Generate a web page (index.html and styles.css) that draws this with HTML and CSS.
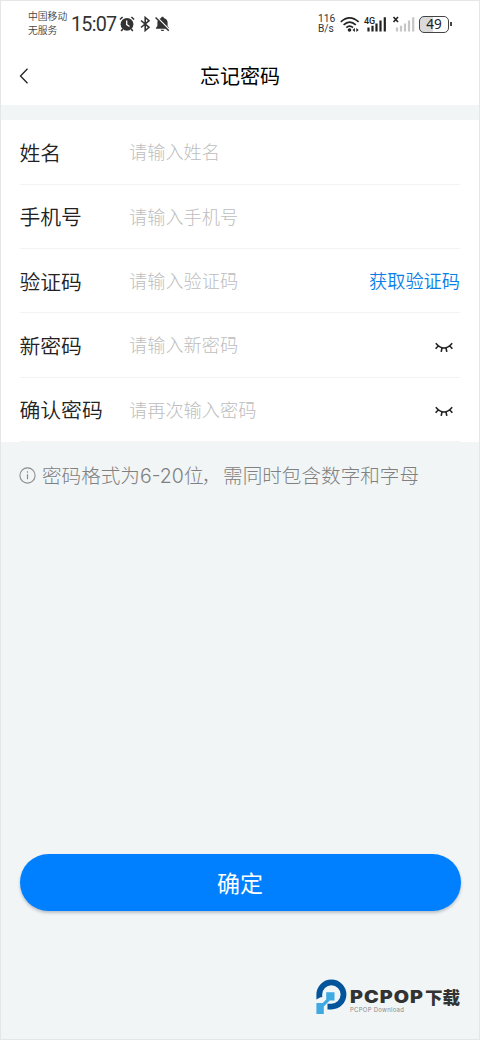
FILE: index.html
```html
<!DOCTYPE html>
<html lang="zh-CN">
<head>
<meta charset="utf-8">
<title>忘记密码</title>
<link rel="stylesheet" href="styles.css">
</head>
<body>
<div class="screen">
  <header class="top">
    <div class="status">
      <div class="carrier"><span>中国移动</span><span>无服务</span></div>
      <span class="clock">15:07</span>
      <svg class="ic-alarm" width="16" height="16" viewBox="0 0 16 16">
        <circle cx="8" cy="8.3" r="6.4" fill="#333"/>
        <path d="M.9 3.5 3.6 1M15.1 3.5 12.4 1M3.8 13 2.2 15M12.2 13l1.6 2" stroke="#333" stroke-width="1.6" fill="none"/>
        <path d="M7.7 4.6v4l2.8 1.9" stroke="#fff" stroke-width="1.3" fill="none"/>
      </svg>
      <svg class="ic-bt" width="11" height="16" viewBox="0 0 11 16">
        <path d="M1 4.5l8 6.8-3.8 3.2v-13L9 4.7l-8 6.8" stroke="#333" stroke-width="1.6" fill="none"/>
      </svg>
      <svg class="ic-bell" width="15" height="16" viewBox="0 0 15 16">
        <path d="M7.5.8c.9 0 1.3.5 1.3 1.2 2.5.6 3.8 2.3 3.8 4.5v3.5l1.5 1.9v.9H.9v-.9l1.5-1.9V6.5c0-2.2 1.3-3.9 3.8-4.5 0-.7.4-1.2 1.3-1.2zM5.7 13.700h3.6c-.2 1.700-3.400 1.700-3.600 0z" fill="#333"/>
        <path d="M1.600 1 14.800 14.200" stroke="#fff" stroke-width="1.500"/>
        <path d="M.6 1.500 13.800 14.700" stroke="#333" stroke-width="1.500"/>
      </svg>
      <div class="speed"><span>116</span><span>B/s</span></div>
      <svg class="ic-wifi" width="20" height="17" viewBox="0 0 20 17">
        <g fill="none" stroke="#222" stroke-width="1.700">
          <path d="M.8 5.800Q9.600-2.200 18.600 5.800"/><path d="M3.600 8.900Q9.600 3.300 15.800 8.900"/><path d="M6.300 11.700Q9.600 8.700 13 11.700"/>
        </g>
        <circle cx="9.500" cy="14" r="1.800" fill="#222"/>
        <path d="M12.500 14l2.400-1.900v3.800zM18.700 14l-2.400-1.900v3.800z" fill="#222"/>
      </svg>
      <svg class="ic-cell" width="24" height="18" viewBox="0 0 24 18">
        <text x="0" y="9" class="cell-text">4G</text>
        <path d="M4.500 12.500v4M8.500 10.800v5.700M12.500 8.500v8M16.500 5.500v11M20.800 2.200v14.300" stroke="#222" stroke-width="2.200"/>
      </svg>
      <svg class="ic-cell2" width="24" height="18" viewBox="0 0 24 18">
        <path d="M1.500 2l4.500 5M6 2 1.500 7" stroke="#222" stroke-width="1.600"/>
        <path d="M5 12.500v4M9 10.800v5.700M13 8.500v8M17 5.500v11M21.200 2.200v14.300" stroke="#c6c6c6" stroke-width="2.200"/>
      </svg>
      <div class="battery"><span>49</span></div>
    </div>
    <div class="nav">
      <svg class="back" width="10" height="18" viewBox="0 0 10 18"><path d="M8.500 1.800 1.500 9l7 7.200" fill="none" stroke="#222" stroke-width="1.300"/></svg>
      <h1>忘记密码</h1>
    </div>
  </header>

  <main class="form">
    <div class="row"><label>姓名</label><span class="hint">请输入姓名</span></div>
    <div class="row"><label>手机号</label><span class="hint">请输入手机号</span></div>
    <div class="row"><label>验证码</label><span class="hint">请输入验证码</span><a class="code">获取验证码</a></div>
    <div class="row"><label>新密码</label><span class="hint">请输入新密码</span>
      <svg class="eye" width="18" height="11" viewBox="0 0 18 11"><path d="M.8 1.200Q9 10.800 17.200 1.200M3.500 3.800.6 6.800M14.500 3.800l2.900 3M7 5.800 6.200 9.800M11 5.800l.8 4" fill="none" stroke="#222" stroke-width="1.600"/></svg>
    </div>
    <div class="row"><label>确认密码</label><span class="hint">请再次输入密码</span>
      <svg class="eye" width="18" height="11" viewBox="0 0 18 11"><path d="M.8 1.200Q9 10.800 17.200 1.200M3.500 3.800.6 6.800M14.500 3.800l2.900 3M7 5.800 6.200 9.800M11 5.800l.8 4" fill="none" stroke="#222" stroke-width="1.600"/></svg>
    </div>
  </main>

  <div class="note">
    <svg width="17" height="17" viewBox="0 0 17 17"><circle cx="8.500" cy="8.500" r="7.600" fill="none" stroke="#8c8c8c" stroke-width="1.100"/><path d="M8.500 7.200v5M8.500 4.200v1.500" stroke="#8c8c8c" stroke-width="1.200"/></svg>
    <p>密码格式为<span class="digits">6-20</span>位<span class="comma">，</span>需同时包含数字和字母</p>
  </div>

  <button class="submit">确定</button>

  <footer class="brand">
    <svg width="31" height="36" viewBox="0 0 31 36">
      <path d="M.4 20.500V15.500a15 15 0 1 1 15 15h-3.900v-5.800h3.900a9.200 9.200 0 1 0-9.200-9.200v2.800H4.500z" fill="#04549c"/>
      <path d="M10.200 13.200h8.300v8.300h-4.700L7.800 27.400v7.500H.4v-11h6.300l3.500-3.400z" fill="#41a9e2"/>
    </svg>
    <div class="brand-text">
      <div class="brand-name"><span class="latin">PCPOP</span><span class="han">下载</span></div>
      <span class="brand-sub">PCPOP Download</span>
    </div>
  </footer>
</div>
</body>
</html>
```
FILE: styles.css
```css
* { box-sizing: border-box; }
body {
  margin: 0;
  font-family: Roboto, "Noto Sans CJK SC", sans-serif;
  color: #222;
}
.screen {
  width: 480px;
  height: 1040px;
  display: flex;
  flex-direction: column;
  background: #f1f5f6;
  border: 1px solid #e4e6e7;
  overflow: hidden;
}
.top { height: 104px; background: #fff; flex: none; }
.status { height: 46px; display: flex; align-items: center; padding-left: 27px; white-space: nowrap; }
.status > * { flex: none; }
.carrier { width: 43px; display: flex; flex-direction: column; font-size: 9.8px; line-height: 14.5px; color: #444; font-weight: 350; }
.clock { width: 48px; font-size: 19.8px; line-height: 24px; letter-spacing: -.8px; color: #333; padding-top: 1px; }
.ic-bt { margin-left: 5px; }
.ic-bell { margin-left: 4px; }
.speed { width: 22px; margin-left: 148px; display: flex; flex-direction: column; font-size: 10.2px; line-height: 10px; color: #333; }
.speed span { height: 10px; }
.ic-wifi { margin-top: 1px; }
.ic-cell { margin-left: 4px; }
.ic-cell2 { margin-left: 4px; }
.cell-text { font: 500 9px Roboto, sans-serif; fill: #222; }
.battery {
  position: relative;
  width: 30px;
  height: 17px;
  margin-left: 3px;
  border: 1.5px solid #444;
  border-radius: 5px;
  background: linear-gradient(90deg, #dadada 48%, #fff 48%);
  font: 400 13.5px/14px "Noto Sans", sans-serif;
  text-align: center;
}
.battery::after {
  content: "";
  position: absolute;
  right: -4px;
  top: 5px;
  width: 2px;
  height: 4px;
  background: #444;
}
.nav { display: grid; grid-template-columns: 60px 1fr 60px; align-items: center; height: 58px; }
.back { margin-left: 18px; }
.nav h1 { margin: 0; padding-top: 2px; text-align: center; font-size: 20px; font-weight: 400; line-height: 30px; color: #000; }
.form { flex: none; margin-top: 15px; padding: 0 19px 0 18.5px; height: 322px; background: #fff; display: grid; grid-template-rows: 64.6px repeat(4, 64.35px); }
.row { display: flex; align-items: center; border-bottom: 1px solid #f3f3f3; white-space: nowrap; }
.row label { width: 109.5px; font-size: 20.8px; font-weight: 350; line-height: 30px; font-family: "Noto Sans CJK SC DemiLight", "Noto Sans CJK SC", sans-serif; }
.hint { flex: 1; padding-top: 3px; font-size: 18.2px; font-weight: 300; line-height: 28px; color: #bdbdbd; }
.code { padding-top: 3px; font-size: 18.2px; font-weight: 350; line-height: 28px; color: #0a80e6; }
.eye { margin-right: 7px; margin-top: 5px; }
.note { flex: none; display: flex; align-items: center; height: 30px; margin: 18px 0 0 18px; color: #808080; }
.note p { margin: 0 0 0 6px; padding-top: 3px; font-size: 19.6px; font-weight: 300; line-height: 30px; white-space: nowrap; }
.digits { font: 300 19.5px Inter, sans-serif; }
.comma { display: inline-block; margin-left: -2px; margin-right: 2px; }
.submit {
  flex: none;
  width: 441px;
  height: 57px;
  margin: 364px 0 0 18.5px;
  padding: 0 0 2px;
  border: 0;
  border-radius: 29px;
  background: #0080ff;
  box-shadow: 0 2px 3px rgba(60, 70, 90, .3);
  color: #fff;
  font: 400 23px/34px "Noto Sans CJK SC", sans-serif;
}
.brand { flex: none; display: flex; margin: 68px 0 0 315px; }
.brand-text { margin-left: 3px; padding-top: 8px; white-space: nowrap; }
.brand-name { display: flex; align-items: center; height: 20px; color: #333; }
.latin { width: 75px; font: 900 17px/20px Inter, sans-serif; letter-spacing: .9px; transform: scaleX(1.16); transform-origin: 0 50%; }
.han { font: 900 17.5px/20px "Noto Sans CJK SC", sans-serif; }
.brand-sub { display: block; font: 400 6px/6px Inter, sans-serif; letter-spacing: .25px; color: #8a8d90; }
```
